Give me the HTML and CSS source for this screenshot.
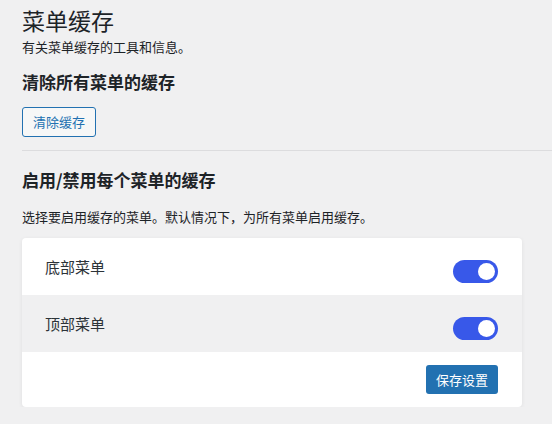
FILE: index.html
```html
<!DOCTYPE html>
<html>
<head>
  <meta charset="utf-8">
  <title>菜单缓存</title>
  <link rel="stylesheet" href="styles.css">
</head>
<body>
  <div class="wrap">
    <h1>菜单缓存</h1>
    <p class="intro">有关菜单缓存的工具和信息。</p>

    <h2 class="first">清除所有菜单的缓存</h2>
    <button class="btn-secondary">清除缓存</button>

    <hr>

    <h2>启用/禁用每个菜单的缓存</h2>
    <p class="desc">选择要启用缓存的菜单。默认情况下，为所有菜单启用缓存。</p>

    <div class="card">
      <div class="row">
        <span class="label">底部菜单</span>
        <label class="toggle"><input type="checkbox" checked><span class="knob"></span></label>
      </div>
      <div class="row alt">
        <span class="label">顶部菜单</span>
        <label class="toggle"><input type="checkbox" checked><span class="knob"></span></label>
      </div>
      <div class="card-foot">
        <button class="btn-primary">保存设置</button>
      </div>
    </div>
  </div>
</body>
</html>
```

FILE: styles.css
```css
body {
  margin: 0;
  background: #f0f0f1;
  color: #1d2327;
  font-family: "Noto Sans CJK SC", "Microsoft YaHei", sans-serif;
  font-size: 13px;
}
.wrap {
  padding-left: 22px;
}
h1 {
  margin: 0;
  padding-top: 5px;
  font-size: 23px;
  font-weight: 400;
  line-height: 30px;
}
.intro {
  margin: 3px 0 0;
  line-height: 18px;
}
h2 {
  margin: 0;
  font-size: 17px;
  font-weight: 700;
  line-height: 22px;
}
h2.first {
  margin-top: 15px;
}
.btn-secondary {
  display: block;
  margin-top: 14px;
  height: 30px;
  padding: 0 10px;
  border: 1px solid #2271b1;
  border-radius: 3px;
  background: #f6f7f7;
  color: #2271b1;
  font-family: inherit;
  font-size: 13px;
  line-height: 28px;
}
hr {
  margin: 13px 0 0;
  border: none;
  border-top: 1px solid #dcdcde;
}
hr + h2 {
  margin-top: 18px;
}
.desc {
  margin: 17px 0 0;
  line-height: 18px;
}
.card {
  width: 500px;
  margin-top: 12px;
  background: #fff;
  border-radius: 4px;
  box-shadow: 0 1px 4px rgba(0, 0, 0, 0.07);
  overflow: hidden;
}
.row {
  display: flex;
  justify-content: space-between;
  align-items: flex-start;
  box-sizing: border-box;
  height: 57px;
  padding: 19px 24px 0 23px;
}
.row.alt {
  background: #f0f0f1;
}
.label {
  font-size: 15px;
  line-height: 20px;
  color: #2c3338;
}
.toggle {
  position: relative;
  display: block;
  width: 45px;
  height: 23px;
  margin-top: 3px;
  border-radius: 12px;
  background: #3858e9;
}
.toggle input {
  display: none;
}
.knob {
  position: absolute;
  top: 3px;
  right: 3px;
  width: 17px;
  height: 17px;
  border-radius: 50%;
  background: #fff;
}
.card-foot {
  display: flex;
  justify-content: flex-end;
  padding: 13px 24px 13px;
}
.btn-primary {
  height: 29px;
  padding: 0 10px;
  border: none;
  border-radius: 3px;
  background: #2271b1;
  color: #fff;
  font-family: inherit;
  font-size: 13px;
  line-height: 29px;
}
```
